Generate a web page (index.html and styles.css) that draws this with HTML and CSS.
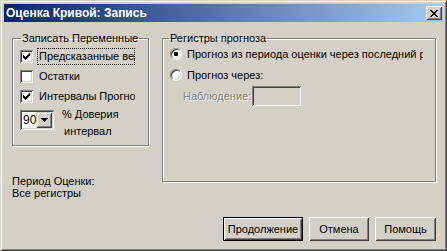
FILE: index.html
```html
<!DOCTYPE html>
<html lang="ru">

<head>
  <meta charset="UTF-8">
  <title>Оценка Кривой: Запись</title>
  <link rel="stylesheet" href="styles.css">
</head>

<body>
  <div class="window">
    <!-- заголовок окна -->
    <div class="titlebar">
      <span class="title">Оценка Кривой: Запись</span>
      <span class="close">
        <svg width="8" height="7" viewBox="0 0 8 7">
          <path d="M0 0h2v1h-2z M6 0h2v1h-2z M1 1h2v1h-2z M5 1h2v1h-2z M2 2h4v1h-4z M3 3h2v1h-2z M2 4h4v1h-4z M1 5h2v1h-2z M5 5h2v1h-2z M0 6h2v1h-2z M6 6h2v1h-2z" fill="#000"/>
        </svg>
      </span>
    </div>

    <div class="client">
      <!-- левая колонка -->
      <div class="col-left">
        <fieldset class="group group-save">
          <legend>Записать Переменные</legend>
          <div class="check-row">
            <span class="box">
              <svg width="7" height="7" viewBox="0 0 7 7">
                <path d="M6 0h1v1h-1z M5 1h2v1h-2z M0 2h1v1h-1z M4 2h3v1h-3z M0 3h2v1h-2z M3 3h3v1h-3z M0 4h5v1h-5z M1 5h3v1h-3z M2 6h1v1h-1z" fill="#000"/>
              </svg>
            </span>
            <span class="check-text focused">Предсказанные величины</span>
          </div>
          <div class="check-row">
            <span class="box"></span>
            <span class="check-text">Остатки</span>
          </div>
          <div class="check-row">
            <span class="box">
              <svg width="7" height="7" viewBox="0 0 7 7">
                <path d="M6 0h1v1h-1z M5 1h2v1h-2z M0 2h1v1h-1z M4 2h3v1h-3z M0 3h2v1h-2z M3 3h3v1h-3z M0 4h5v1h-5z M1 5h3v1h-3z M2 6h1v1h-1z" fill="#000"/>
              </svg>
            </span>
            <span class="check-text">Интервалы Прогноза</span>
          </div>
          <div class="confidence">
            <div class="combo">
              <span class="combo-value">90</span>
              <span class="combo-btn">
                <svg width="7" height="4" viewBox="0 0 7 4">
                  <path d="M0 0h7v1h-7z M1 1h5v1h-5z M2 2h3v1h-3z M3 3h1v1h-1z" fill="#000"/>
                </svg>
              </span>
            </div>
            <div class="conf-text">
              <div>% Доверия</div>
              <div class="conf-second">интервал</div>
            </div>
          </div>
        </fieldset>

        <div class="period">
          <div>Период Оценки:</div>
          <div>Все регистры</div>
        </div>
      </div>

      <!-- правая колонка -->
      <div class="col-right">
        <fieldset class="group group-forecast">
          <legend>Регистры прогноза</legend>
          <div class="radio-row">
            <span class="radio"><span class="dot"></span></span>
            <span class="radio-text">Прогноз из периода оценки через последний регистр</span>
          </div>
          <div class="radio-row">
            <span class="radio"></span>
            <span class="radio-text">Прогноз через:</span>
          </div>
          <div class="obs-row">
            <span class="obs-label">Наблюдение:</span>
            <span class="obs-input"></span>
          </div>
        </fieldset>

        <div class="buttons">
          <button class="btn btn-default">Продолжение</button>
          <button class="btn btn-cancel">Отмена</button>
          <button class="btn btn-help">Помощь</button>
        </div>
      </div>
    </div>
  </div>
</body>

</html>
```

FILE: styles.css
```css
* {
  margin: 0;
  padding: 0;
  box-sizing: border-box;
}

body {
  font-family: "Liberation Sans", Arial, sans-serif;
  font-size: 11px;
  color: #000;
  background: #d4d0c8;
}

/* рамка окна */
.window {
  width: 447px;
  height: 251px;
  background: #d4d0c8;
  border: 1px solid;
  border-color: #d4d0c8 #404040 #404040 #d4d0c8;
  box-shadow: inset 1px 1px #fff, inset -1px -1px #808080;
  padding: 3px;
  display: flex;
  flex-direction: column;
}

.titlebar {
  height: 18px;
  flex: none;
  display: flex;
  align-items: center;
  padding-left: 2px;
  background: linear-gradient(to right, #0a246a, #a6caf0);
  color: #fff;
  font-size: 12px;
  font-weight: bold;
}

.title {
  flex: 1;
}

.close {
  width: 16px;
  height: 14px;
  margin-right: 1px;
  display: flex;
  align-items: center;
  justify-content: center;
  background: #d4d0c8;
  box-shadow: inset 1px 1px #fff, inset -1px -1px #404040, inset 2px 2px #d4d0c8, inset -2px -2px #808080;
}

.client {
  flex: 1;
  display: grid;
  grid-template-columns: 137px 274px;
  column-gap: 13px;
  padding: 10px 6px 6px 8px;
}

.col-right {
  display: flex;
  flex-direction: column;
}

/* групповые рамки */
.group {
  border: 1px solid #808080;
  box-shadow: inset 1px 1px #fff, 1px 1px #fff;
  padding: 0 0 0 7px;
}

.group legend {
  line-height: 13px;
  padding: 0 1px;
}

.group-save {
  height: 114px;
}

.group-save legend {
  margin-left: 1px;
}

.group-forecast {
  height: 150px;
}

.group-forecast legend {
  margin-left: -1px;
}

/* флажки */
.check-row {
  height: 20px;
  display: flex;
  align-items: center;
}

.check-row:first-of-type {
  margin-top: 1px;
}

.box {
  width: 13px;
  height: 13px;
  flex: none;
  display: flex;
  align-items: center;
  justify-content: center;
  background: #fff;
  box-shadow: inset 1px 1px #808080, inset -1px -1px #fff, inset 2px 2px #404040, inset -2px -2px #d4d0c8;
}

.check-text {
  width: 98px;
  height: 17px;
  line-height: 17px;
  margin-left: 4px;
  padding-left: 2px;
  white-space: nowrap;
  overflow: hidden;
}

.check-text.focused {
  outline: 1px dotted #000;
  outline-offset: -1px;
}

.confidence {
  display: flex;
  margin-top: 4px;
}

.combo {
  width: 34px;
  height: 20px;
  flex: none;
  display: flex;
  padding: 2px;
  background: #fff;
  box-shadow: inset 1px 1px #808080, inset -1px -1px #fff, inset 2px 2px #404040, inset -2px -2px #d4d0c8;
}

.combo-value {
  flex: 1;
  line-height: 16px;
  padding-left: 1px;
  font-size: 12px;
}

.combo-btn {
  width: 16px;
  display: flex;
  align-items: center;
  justify-content: center;
  background: #d4d0c8;
  box-shadow: inset 1px 1px #d4d0c8, inset -1px -1px #404040, inset 2px 2px #fff, inset -2px -2px #808080;
}

.conf-text {
  margin-left: 8px;
  line-height: 17px;
  margin-top: -4px;
}

.conf-second {
  padding-left: 2px;
}

.period {
  margin-top: 29px;
  line-height: 12px;
}

/* переключатели */
.radio-row {
  height: 21px;
  display: flex;
  align-items: center;
}

.radio-row:first-of-type {
  margin-top: -2px;
}

.radio {
  width: 12px;
  height: 12px;
  flex: none;
  display: flex;
  align-items: center;
  justify-content: center;
  border-radius: 50%;
  background: #fff;
  border: 1px solid;
  border-color: #808080 #fff #fff #808080;
  box-shadow: inset 1px 1px #404040, inset -1px -1px #d4d0c8;
}

.dot {
  width: 4px;
  height: 4px;
  border-radius: 1px;
  background: #000;
}

.radio-text {
  width: 238px;
  margin-left: 3px;
  padding-left: 2px;
  white-space: nowrap;
  overflow: hidden;
}

.obs-row {
  display: flex;
  align-items: center;
  padding-left: 13px;
  margin-top: 1px;
}

.obs-label {
  width: 69px;
  color: #808080;
  text-shadow: 1px 1px 0 #fff;
}

.obs-input {
  width: 49px;
  height: 20px;
  box-shadow: inset 1px 1px #808080, inset -1px -1px #fff, inset 2px 2px #404040, inset -2px -2px #d4d0c8;
}

/* кнопки */
.buttons {
  margin-top: auto;
  display: flex;
  justify-content: flex-end;
  gap: 6px;
}

.btn {
  height: 24px;
  font: inherit;
  color: #000;
  background: #d4d0c8;
  border: none;
  box-shadow: inset 1px 1px #fff, inset -1px -1px #404040, inset 2px 2px #d4d0c8, inset -2px -2px #808080;
}

.btn-default {
  width: 80px;
  border: 1px solid #000;
}

.btn-cancel {
  width: 60px;
}

.btn-help {
  width: 61px;
}
```
